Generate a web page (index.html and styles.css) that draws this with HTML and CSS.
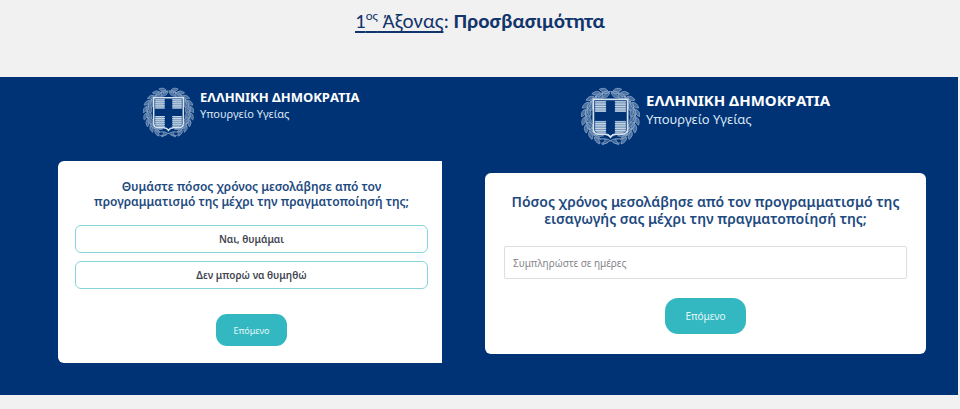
FILE: index.html
```html
<!DOCTYPE html>
<html lang="el">
<head>
<meta charset="utf-8">
<meta name="viewport" content="width=device-width, initial-scale=1">
<title>1ος Άξονας: Προσβασιμότητα</title>
<link rel="stylesheet" href="styles.css">
</head>
<body>
<svg class="defs" aria-hidden="true">
  <defs>
    <g id="leaf">
      <path d="M50 6 Q46 -1 36 2 Q40 10 50 6Z"/>
      <path d="M50 9 Q44 10 39 17 Q49 19 53 10Z"/>
      <path d="M54 8 Q46 6 39 9 Q46 13 54 8Z"/>
    </g>
    <g id="branch">
      <use href="#leaf" transform="rotate(-6 50 50)"/>
      <use href="#leaf" transform="rotate(-23 50 50)"/>
      <use href="#leaf" transform="rotate(-40 50 50)"/>
      <use href="#leaf" transform="rotate(-57 50 50)"/>
      <use href="#leaf" transform="rotate(-74 50 50)"/>
      <use href="#leaf" transform="rotate(-91 50 50)"/>
      <use href="#leaf" transform="rotate(-108 50 50)"/>
      <use href="#leaf" transform="rotate(-125 50 50)"/>
      <use href="#leaf" transform="rotate(-142 50 50)"/>
    </g>
    <g id="quarter">
      <path d="M0 1H19M0 5H19M0 9H19M0 13H19M0 17H19M0 21H19"/>
    </g>
    <clipPath id="shield-clip"><path d="M23 23H77V72Q77 77 70 78H60Q53 78 50 82Q47 78 40 78H30Q23 77 23 72Z"/></clipPath>
    <symbol id="emblem" viewBox="0 0 100 100">
      <g class="wreath">
        <use href="#branch"/>
        <use href="#branch" transform="matrix(-1 0 0 1 100 0)"/>
        <path d="M32 88Q43 86 50 91Q58 97 67 95M68 88Q57 86 50 91Q42 97 33 95M42 88L36 98L46 94M58 88L64 98L54 94"/>
      </g>
      <path class="shield" d="M21 21H79V72Q79 79 70 80H60Q53 80 50 85Q47 80 40 80H30Q21 79 21 72Z"/>
      <g clip-path="url(#shield-clip)">
        <path class="field" d="M24 24H42V42H24ZM58 24H76V42H58ZM24 58H42V84H24ZM58 58H76V84H58Z"/>
        <g class="stripes">
          <use href="#quarter" x="24" y="24"/>
          <use href="#quarter" x="57" y="24"/>
          <use href="#quarter" x="24" y="57"/>
          <use href="#quarter" x="57" y="57"/>
        </g>
        <path class="cross" d="M43 21H57V43H79V57H57V86H43V57H21V43H43Z"/>
      </g>
    </symbol>
  </defs>
</svg>

<header class="title">
  <h1><span class="axis">1<sup>ος</sup> Άξονας</span>: <strong>Προσβασιμότητα</strong></h1>
</header>

<main class="stage">
  <section class="panel panel-choice">
    <div class="brand">
      <svg class="emblem" aria-hidden="true"><use href="#emblem"/></svg>
      <div class="brand-text">
        <p class="state">ΕΛΛΗΝΙΚΗ ΔΗΜΟΚΡΑΤΙΑ</p>
        <p class="ministry">Υπουργείο Υγείας</p>
      </div>
    </div>
    <form class="card">
      <h2>Θυμάστε πόσος χρόνος μεσολάβησε από τον<br>προγραμματισμό της μέχρι την πραγματοποίησή της;</h2>
      <div class="options">
        <button class="option" type="button">Ναι, θυμάμαι</button>
        <button class="option" type="button">Δεν μπορώ να θυμηθώ</button>
      </div>
      <button class="next" type="button">Επόμενο</button>
    </form>
  </section>

  <section class="panel panel-days">
    <div class="brand">
      <svg class="emblem" aria-hidden="true"><use href="#emblem"/></svg>
      <div class="brand-text">
        <p class="state">ΕΛΛΗΝΙΚΗ ΔΗΜΟΚΡΑΤΙΑ</p>
        <p class="ministry">Υπουργείο Υγείας</p>
      </div>
    </div>
    <form class="card">
      <h2><label for="days">Πόσος χρόνος μεσολάβησε από τον προγραμματισμό της<br>εισαγωγής σας μέχρι την πραγματοποίησή της;</label></h2>
      <input class="days" id="days" type="text" placeholder="Συμπληρώστε σε ημέρες">
      <button class="next" type="button">Επόμενο</button>
    </form>
  </section>
</main>
</body>
</html>
```
FILE: styles.css
```css
* {
  box-sizing: border-box;
}

body {
  margin: 0;
  background: #f1f1f1;
  font-family: "Noto Sans", "Open Sans", sans-serif;
}

h1,
h2,
p {
  margin: 0;
}

button,
input {
  font-family: inherit;
}

.defs {
  position: absolute;
  width: 0;
  height: 0;
}

.title {
  padding: 9px 0 44px;
  text-align: center;
}

.title h1 {
  color: #12356b;
  font-family: Carlito, Lato, "Open Sans", sans-serif;
  font-size: 21px;
  font-weight: 400;
  line-height: 24px;
}

.title sup {
  font-size: 13px;
  line-height: 0;
}

.axis {
  text-decoration: underline;
  text-decoration-skip-ink: none;
  text-underline-offset: 3px;
}

.stage {
  display: grid;
  grid-template-columns: 384fr 441fr;
  align-items: start;
  gap: 43px;
  margin-right: 2px;
  padding: 10px 32px 32px 58px;
  background: #003376;
}

.brand {
  display: flex;
  align-items: flex-start;
  color: #fff;
}

.emblem {
  flex: none;
  fill: none;
}

.wreath {
  fill: #4a70a0;
  stroke: #9fb8d4;
  stroke-width: 1;
}

.field {
  fill: #7797bb;
}

.stripes {
  stroke: #c5d5e6;
  stroke-width: 2;
}

.cross {
  fill: #003376;
}

.shield {
  fill: #003376;
  stroke: #d5e2ef;
  stroke-width: 3;
}

.state {
  font-weight: 700;
  white-space: nowrap;
}

.ministry {
  color: #dce6f2;
}

.card {
  display: flex;
  flex-direction: column;
  align-items: center;
  background: #fff;
}

.card h2 {
  color: #1d4a80;
  font-weight: 600;
  text-align: center;
}

.next {
  border: 0;
  background: #33b7c1;
  color: #e4f7f8;
}

.panel-choice .brand {
  gap: 6px;
  padding-left: 85px;
}

.panel-choice .emblem {
  width: 51px;
  height: 51px;
}

.panel-choice .state {
  padding-top: 2px;
  font-size: 13px;
  line-height: 17px;
}

.panel-choice .ministry {
  font-size: 11px;
  line-height: 16px;
}

.panel-choice .card {
  margin-top: 23px;
  padding: 18px 14px 17px 17px;
  border-radius: 6px 0 0 6px;
}

.panel-choice h2 {
  font-size: 12px;
  line-height: 15px;
}

.options {
  display: grid;
  gap: 8px;
  width: 100%;
  margin-top: 16px;
}

.option {
  height: 28px;
  padding: 0;
  border: 1px solid #86d5db;
  border-radius: 6px;
  background: #fff;
  color: #414550;
  font-size: 10px;
  font-weight: 600;
}

.panel-choice .next {
  width: 71px;
  height: 32px;
  margin-top: 25px;
  border-radius: 11px;
  font-size: 9px;
}

.panel-days .brand {
  gap: 6px;
  padding-left: 96px;
}

.panel-days .emblem {
  width: 59px;
  height: 59px;
}

.panel-days .state {
  padding-top: 4px;
  font-size: 15px;
  line-height: 18px;
}

.panel-days .ministry {
  font-size: 13px;
  line-height: 20px;
}

.panel-days .card {
  margin-top: 27px;
  padding: 20px 19px;
  border-radius: 6px;
}

.panel-days h2 {
  font-size: 14px;
  line-height: 17px;
}

.days {
  width: 100%;
  height: 33px;
  margin-top: 19px;
  padding: 0 8px;
  border: 1px solid #dedee2;
  border-radius: 2px;
  background: #fff;
  font-size: 10px;
}

.days::placeholder {
  color: #85858a;
  opacity: 1;
}

.panel-days .next {
  width: 81px;
  height: 36px;
  margin-top: 19px;
  border-radius: 13px;
  font-size: 10px;
}
```
